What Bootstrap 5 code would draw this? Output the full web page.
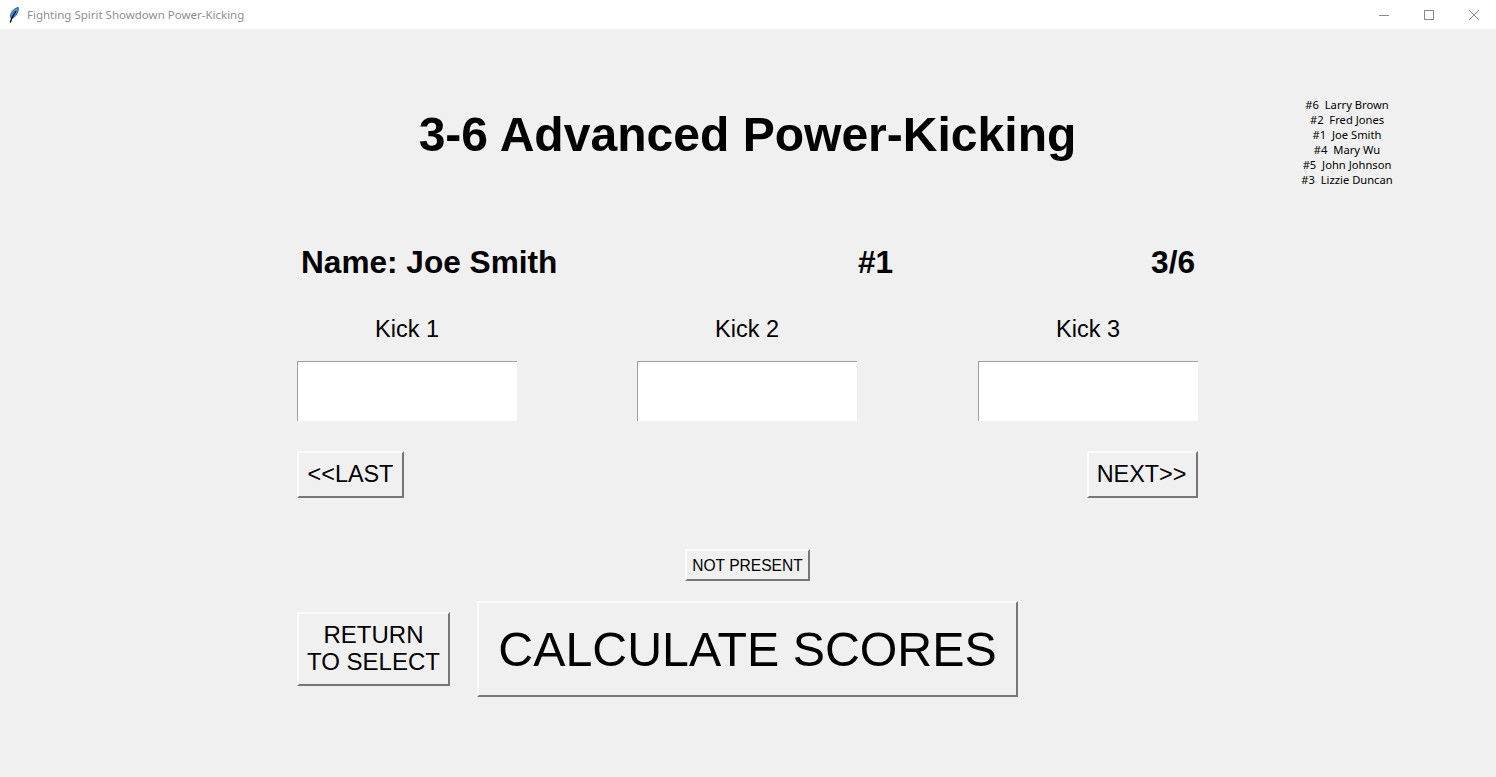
<!DOCTYPE html>
<html lang="en">
<head>
  <meta charset="UTF-8" />
  <meta name="viewport" content="width=device-width, initial-scale=1" />
  <title>Fighting Spirit Showdown Power-Kicking</title>
  <link href="https://cdn.jsdelivr.net/npm/bootstrap@5.3.3/dist/css/bootstrap.min.css" rel="stylesheet" />
  <style>
    html, body { height: 100%; }
    body { background: #f0f0f0; color: #000; font-family: "Liberation Sans", Arial, sans-serif; overflow: hidden; }
    .title-strip { height: 29px; background: #fff; }
    .title-strip .app-name { font: 11.5px "Noto Sans", sans-serif; color: #8f8f8f; margin-left: 8px; }
    .feather { margin-left: 9px; }
    .win-btn { width: 45px; height: 29px; }
    .page-grid { display: grid; grid-template-columns: 297px 901px 1fr; }
    .page-title { font-size: 48.05px; font-weight: 700; line-height: 56px; margin: 78px 0 0; text-align: center; }
    .roster { font: 11.2px/15px "Noto Sans", sans-serif; text-align: center; width: 100px; margin: 68px 0 0 99px; white-space: pre; }
    .info-row { margin-top: 81px; padding: 0 3px 0 4px; font-size: 31.6px; font-weight: 700; line-height: 37px; }
    .name-cell { width: 557px; }
    .kick-row { margin-top: 35px; gap: 120px; }
    .kick-col { width: 220px; }
    .kick-label { font-size: 23.5px; line-height: 27px; text-align: center; margin-bottom: 18px; }
    .kick-input.form-control { height: 60px; border-radius: 0; border-width: 1px 0 0 1px; border-style: solid; border-color: #a0a0a0; background: #fff; box-shadow: none; }
    .tk-btn.btn { border-radius: 0; border-width: 2px; border-style: solid; border-color: #fbfbfb #777 #777 #fbfbfb; background: #f0f0f0; color: #000; padding: 0; line-height: 1; font-family: "Liberation Sans", Arial, sans-serif; }
    .nav-row { margin-top: 30px; }
    .btn-nav.btn { height: 47px; font-size: 23.4px; }
    .btn-last.btn { width: 107px; }
    .btn-next.btn { width: 111px; padding-right: 2px; }
    .btn-absent.btn { display: block; width: 125px; height: 32px; font-size: 15.6px; margin: 51px auto 0; padding-top: 2px; }
    .action-row { margin-top: 20px; }
    .btn-return.btn { width: 153px; height: 74px; font-size: 24px; line-height: 27px; margin-right: 27px; padding-bottom: 2px; }
    .btn-calc.btn { width: 541px; height: 96px; font-size: 48.3px; }
  </style>
</head>
<body>
  <div class="title-strip d-flex align-items-center">
    <svg class="feather" width="10" height="16" viewBox="0 0 10 16">
      <path d="M9.300 .5C5.500 1 2.200 4.500 1.500 8.500 1.300 10 1.800 11.200 2.800 11.500 6.800 10 9.600 5.500 9.300 .5Z" fill="#4a96e6" stroke="#16386a" stroke-width=".8"/>
      <path d="M7 4 2.800 11 1.300 15.500" fill="none" stroke="#000" stroke-width="1.300"/>
    </svg>
    <span class="app-name">Fighting Spirit Showdown Power-Kicking</span>
    <div class="ms-auto d-flex">
      <div class="win-btn d-flex align-items-center justify-content-center">
        <svg width="10" height="10" viewBox="0 0 10 10"><path d="M0 5.500H10" stroke="#8a8a8a"/></svg>
      </div>
      <div class="win-btn d-flex align-items-center justify-content-center">
        <svg width="10" height="10" viewBox="0 0 10 10"><rect x=".5" y=".5" width="9" height="9" fill="none" stroke="#8a8a8a"/></svg>
      </div>
      <div class="win-btn d-flex align-items-center justify-content-center">
        <svg width="10" height="10" viewBox="0 0 10 10"><path d="M0 0 10 10M10 0 0 10" stroke="#8a8a8a"/></svg>
      </div>
    </div>
  </div>

  <div class="page-grid">
    <div></div>
    <main>
      <h1 class="page-title">3-6 Advanced Power-Kicking</h1>

      <div class="info-row d-flex">
        <div class="name-cell">Name: Joe Smith</div>
        <div>#1</div>
        <div class="ms-auto">3/6</div>
      </div>

      <div class="kick-row d-flex">
        <div class="kick-col">
          <div class="kick-label">Kick 1</div>
          <input class="kick-input form-control" type="text" aria-label="Kick 1" />
        </div>
        <div class="kick-col">
          <div class="kick-label">Kick 2</div>
          <input class="kick-input form-control" type="text" aria-label="Kick 2" />
        </div>
        <div class="kick-col ms-auto">
          <div class="kick-label">Kick 3</div>
          <input class="kick-input form-control" type="text" aria-label="Kick 3" />
        </div>
      </div>

      <div class="nav-row d-flex justify-content-between">
        <button class="tk-btn btn btn-nav btn-last">&lt;&lt;LAST</button>
        <button class="tk-btn btn btn-nav btn-next">NEXT&gt;&gt;</button>
      </div>

      <button class="tk-btn btn btn-absent">NOT PRESENT</button>

      <div class="action-row d-flex align-items-center">
        <button class="tk-btn btn btn-return">RETURN<br />TO SELECT</button>
        <button class="tk-btn btn btn-calc">CALCULATE SCORES</button>
      </div>
    </main>
    <aside class="roster">#6  Larry Brown
#2  Fred Jones
#1  Joe Smith
#4  Mary Wu
#5  John Johnson
#3  Lizzie Duncan</aside>
  </div>

  <script src="https://cdn.jsdelivr.net/npm/bootstrap@5.3.3/dist/js/bootstrap.bundle.min.js"></script>
</body>
</html>
